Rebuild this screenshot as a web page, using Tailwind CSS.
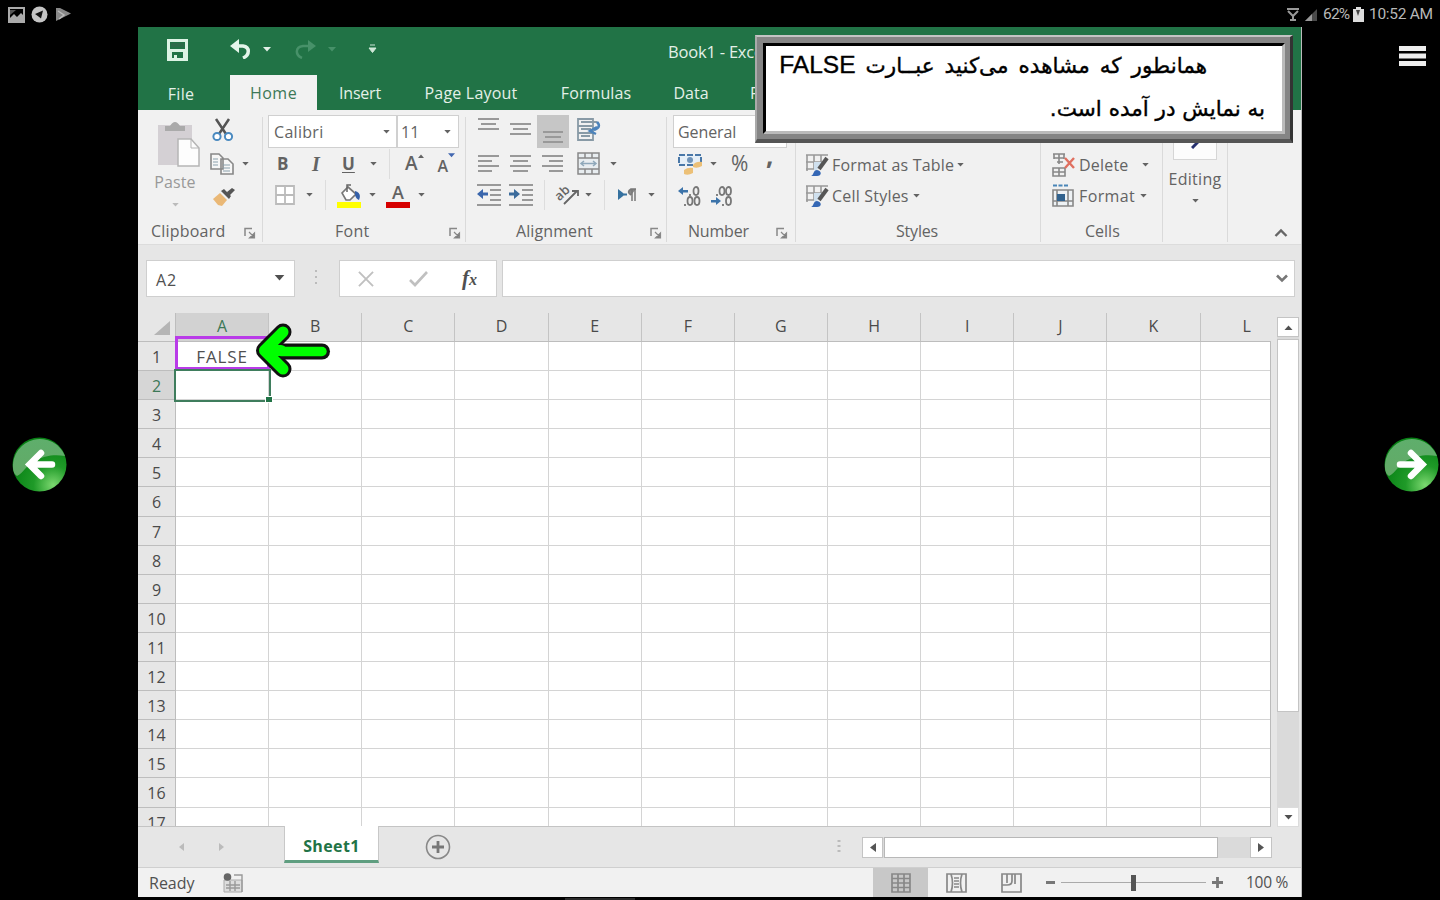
<!DOCTYPE html>
<html lang="en">
<head>
    <meta charset="UTF-8">
    <meta name="viewport" content="width=device-width, initial-scale=1.0">
    <title>Book1 - Excel</title>
    <script src="https://cdn.jsdelivr.net/npm/@tailwindcss/browser@4"></script>
</head>
<body class="relative bg-black w-[1440px] h-[900px] overflow-hidden flex flex-col font-['Open_Sans','Noto_Sans',sans-serif] text-[16px] text-[#505050]">

    <!-- Shared symbols -->
    <svg class="absolute w-0 h-0">
        <symbol id="caret" viewBox="0 0 8 5"><path d="M0 0h8L4 4.5z" fill="currentColor"/></symbol>
        <symbol id="launcher" viewBox="0 0 12 12"><path d="M1 9V1.500h7" fill="none" stroke="#888" stroke-width="1.500"/><path d="M5 5l5 5M10.500 6v5h-5z" fill="#777" stroke="#888" stroke-width="1.200"/></symbol>
        <symbol id="styleIcon" viewBox="0 0 24 24">
            <path d="M1 2h22M1 9h16M1 16h9M2 2v16M9 2v14M16 2v8" fill="none" stroke="#999" stroke-width="1.600"/>
            <path d="M9 9h8l-5 8H9z" fill="#cfe0ee"/>
            <path d="M22 5l-8 11" stroke="#555" stroke-width="4"/>
            <path d="M6 23c3-1 2-6 6-6 5 1 5 6 0 6z" fill="#3467b5"/>
        </symbol>
        <linearGradient id="glass" x1="0" y1="0" x2="0" y2="1"><stop offset="0" stop-color="#5fae6c"/><stop offset="1" stop-color="#62aa66"/></linearGradient>
        <radialGradient id="ball" cx=".75" cy=".88" r=".8"><stop offset="0" stop-color="#7cd870"/><stop offset=".45" stop-color="#1f9a28"/><stop offset="1" stop-color="#078014"/></radialGradient>
    </svg>

    <!-- Device status bar -->
    <header class="h-[27px] shrink-0 flex items-center justify-between pl-[8px] pr-[8px] pt-[2px] text-[#b8b8b8] font-[Roboto,sans-serif]">
        <div class="flex items-center gap-[6px]">
            <svg class="w-[17px] h-[16px]" viewBox="0 0 17 16"><path fill-rule="evenodd" d="M0 0h17v16H0zM2 2v9l4-4 3 3 4-4 2 2V2z" fill="#aaa"/><path d="M2 3h6l-6 5z" fill="#555"/></svg>
            <svg class="w-[17px] h-[17px]" viewBox="0 0 17 17"><circle cx="8.500" cy="8.500" r="8" fill="#c4c4c4"/><path d="M4 8l8-3.500-2 8-2.500-2z" fill="#111"/></svg>
            <svg class="ml-[2px] w-[15px] h-[13px]" viewBox="0 0 15 13"><path d="M0 0h4l11 5.500-6 3L0 13z" fill="#888"/><path d="M2 3l6 4-5 4" fill="none" stroke="#bbb" stroke-width="1.500"/></svg>
        </div>
        <div class="flex items-center text-[15.5px] leading-none">
            <svg class="w-[12px] h-[14px] mr-[6px]" viewBox="0 0 12 14"><path d="M0 1h12M1 3l5 5 5-5M3 12h6M6 7v6" fill="none" stroke="#999" stroke-width="2"/></svg>
            <svg class="w-[12px] h-[12px] mr-[6px]" viewBox="0 0 12 12"><path d="M12 0v12H0z" fill="#4a4a4a"/><path d="M7 5v7H0z" fill="#999"/></svg>
            <span class="tracking-[-0.8px] w-[28px]">62%</span>
            <svg class="w-[11px] h-[15px] ml-[2px] mr-[5px]" viewBox="0 0 11 15"><path d="M3 0h5v2h3v13H0V2h3z" fill="#ddd"/><path d="M3 3h4l-2 6z" fill="#444"/></svg>
            <span class="tracking-[-0.3px] w-[63px] whitespace-nowrap">10:52 AM</span>
        </div>
    </header>

    <div class="flex flex-1 min-h-0">
        <aside class="w-[138px] pl-[12px] pt-[410px]">
            <svg class="w-[55px] h-[55px]" viewBox="0 0 55 55">
                <circle cx="27.500" cy="27.500" r="27" fill="url(#ball)"/>
                <path d="M1 31A27 27 0 0 1 53 19c-14-2-20 1-27 3C16 25 12 36 5 39Q1 36 1 31z" fill="url(#glass)"/>
                <path d="M40 27.500H18M29 16L17.500 27.500 29 39" fill="none" stroke="#fff" stroke-width="6.500" stroke-linecap="round" stroke-linejoin="miter"/>
            </svg>
        </aside>

        <!-- Excel window -->
        <main class="relative w-[1164px] h-[870px] bg-[#e6e6e6] flex flex-col border-r border-[#bbb]">
            <!-- Title bar -->
            <div class="h-[48px] shrink-0 bg-[#217346] flex items-center text-[#e4f0e8]">
                <svg class="ml-[28px] mb-[2px] w-[23px] h-[22px]" viewBox="0 0 23 22"><path fill-rule="evenodd" d="M1 0h21v22H1zM4 3v7h15V3zM6 13v6h2v-3h3v3h6v-6z" fill="#dcf3e4"/><path d="M5 4h13v4H5z" fill="#2c6b49"/></svg>
                <svg class="ml-[41px] mb-[4px] w-[22px] h-[20px]" viewBox="0 0 22 20"><path d="M4 7h9c7 1 7 9 0 12" fill="none" stroke="#e4f5ea" stroke-width="3.500"/><path d="M0 7L9 0v14z" fill="#e4f5ea"/></svg>
                <svg class="ml-[11px] mb-[4px] w-[8px] h-[5px]"><use href="#caret"/></svg>
                <svg class="ml-[23px] mb-[4px] w-[22px] h-[20px]" viewBox="0 0 22 20"><path d="M18 7H9C1 8 1 16 8 19" fill="none" stroke="#479169" stroke-width="2.500"/><path d="M22 7l-8-6v12z" fill="#479169"/></svg>
                <svg class="ml-[12px] mb-[4px] w-[8px] h-[5px] text-[#479169]"><use href="#caret"/></svg>
                <svg class="ml-[32px] mb-[4px] w-[9px] h-[10px]" viewBox="0 0 9 10"><path d="M2 1h5M1 4h7L4.500 8.500z" fill="#cfe8d8" stroke="#cfe8d8"/></svg>
                <span class="ml-[291px] mt-[2px] text-[16.5px] tracking-[-0.2px]">Book1 - Excel</span>
            </div>
            <!-- Ribbon tabs -->
            <nav class="h-[35px] shrink-0 bg-[#217346] flex items-stretch text-[#e4f0e8] leading-[36px] text-center font-medium whitespace-nowrap">
                <span class="w-[86px] pt-[1px] tracking-[0.3px]">File</span>
                <span class="ml-[6px] w-[87px] bg-[#f2f2f2] text-[#3d7857] tracking-[0.5px]">Home</span>
                <span class="ml-[14px] w-[58px] tracking-[-0.2px]">Insert</span>
                <span class="ml-[20px] w-[124px] tracking-[0.2px]">Page Layout</span>
                <span class="ml-[20px] w-[86px] tracking-[0.1px]">Formulas</span>
                <span class="ml-[22px] w-[60px]">Data</span>
                <span class="ml-[29px]">Review</span>
            </nav>

            <!-- Ribbon -->
            <section class="h-[135px] shrink-0 bg-[#f1f1f1] border-b border-[#dcdcdc] flex pt-[6px] text-[#636363]">
                <div class="w-[125px] mt-px mb-[2px] border-r border-[#dadada] flex flex-col">
                    <div class="h-[99px] flex">
                        <div class="w-[74px] flex flex-col items-center text-[#999]">
                            <svg class="ml-[6px] mt-[4px] w-[43px] h-[47px]" viewBox="0 0 43 47"><path d="M1 4h34v40H1z" fill="#d4d0d4"/><path d="M8 8V5h5q5-8 10 0h5v5H8z" fill="#aaa"/><path d="M21 18h13l8 9v18H21z" fill="#fdfdfd" stroke="#b5b5b5" stroke-width="1.500"/><path d="M34 18v9h8" fill="none" stroke="#b5b5b5"/></svg>
                            <span class="leading-[22px] mt-[3px] tracking-[0.1px]">Paste</span>
                            <svg class="w-[7px] h-[4px] mt-[10px] text-[#bbb]"><use href="#caret"/></svg>
                        </div>
                        <div class="flex flex-col">
                            <svg class="mt-[1px] w-[22px] h-[24px]" viewBox="0 0 22 24"><path d="M4 1l10 15M17 1L7 16" stroke="#555" stroke-width="2.500"/><circle cx="5" cy="18.500" r="3.600" fill="#fff" stroke="#4a8ac0" stroke-width="2"/><circle cx="16.500" cy="18.500" r="3.600" fill="#fff" stroke="#4a8ac0" stroke-width="2"/></svg>
                            <div class="flex items-center mt-[11px] ml-[-2px]">
                                <svg class="w-[24px] h-[22px]" viewBox="0 0 24 22"><path d="M1 1h8l4 4v11H1zM11 6h7l5 5v10H11z" fill="#f6f6f6" stroke="#888" stroke-width="1.600"/><path d="M3 6h5M3 9h5M3 12h5M13 12h7M13 15h7M13 18h7" stroke="#8aa0ac" stroke-width="1.200"/></svg>
                                <svg class="ml-[8px] w-[7px] h-[4px]"><use href="#caret"/></svg>
                            </div>
                            <svg class="mt-[12px] w-[23px] h-[20px]" viewBox="0 0 23 20"><path d="M1 12l7-6 7 7-5 6-4-1z" fill="#eab876"/><path d="M9 4l8 8 2-3-7-7zM15 5l5-4 3 2-5 5z" fill="#555"/></svg>
                        </div>
                    </div>
                    <div class="flex items-center mt-[9px] leading-[22px]"><span class="pl-[13px] w-[106px] whitespace-nowrap tracking-[0.2px]">Clipboard</span><svg class="mt-[3px] w-[12px] h-[12px]"><use href="#launcher"/></svg></div>
                </div>

                <div class="w-[203px] mt-px mb-[2px] border-r border-[#dadada] flex flex-col">
                    <div class="h-[33px] flex pl-[5px]">
                        <div class="mt-[-2px] w-[129px] h-[33px] bg-white border border-[#d0d0d0] flex items-center justify-between pl-[5px] pr-[6px] tracking-[0.3px]">Calibri <svg class="w-[7px] h-[4px]"><use href="#caret"/></svg></div>
                        <div class="mt-[-2px] w-[62px] h-[33px] bg-white border border-[#d0d0d0] flex items-center justify-between pl-[3px] pr-[7px]">11 <svg class="w-[7px] h-[4px]"><use href="#caret"/></svg></div>
                    </div>
                    <div class="h-[32px] flex items-center text-[17px]">
                        <b class="ml-[14px] w-[14px]">B</b>
                        <b class="ml-[21px] w-[12px] font-['Liberation_Serif',serif] italic text-[20px]">I</b>
                        <b class="ml-[18px] w-[16px] underline underline-offset-2">U</b>
                        <svg class="ml-[12px] w-[7px] h-[4px]"><use href="#caret"/></svg>
                        <i class="ml-[12px] w-px h-[30px] bg-[#ddd]"></i>
                        <span class="ml-[15px] text-[19px] font-semibold">A</span>
                        <svg class="w-[6px] h-[4px] mb-[16px] rotate-180"><use href="#caret"/></svg>
                        <span class="ml-[14px] mt-[4px] text-[16px] font-semibold">A</span>
                        <svg class="w-[7px] h-[5px] mb-[16px] text-[#4267b0]"><use href="#caret"/></svg>
                    </div>
                    <div class="h-[34px] flex items-center">
                        <svg class="ml-[12px] w-[20px] h-[20px]" viewBox="0 0 20 20"><path d="M1 1h18v18H1zM10 1v18M1 10h18" fill="#fff" stroke="#bbb" stroke-width="1.800"/></svg>
                        <svg class="ml-[11px] w-[7px] h-[4px]"><use href="#caret"/></svg>
                        <i class="ml-[12px] w-px h-[30px] bg-[#ddd]"></i>
                        <svg class="ml-[11px] mt-[2px] w-[24px] h-[24px]" viewBox="0 0 24 24"><path d="M5 9l6-6 8 7-6 6H9z" fill="#fff" stroke="#777" stroke-width="1.700"/><path d="M10 8V1h4" fill="none" stroke="#666" stroke-width="1.500"/><path d="M18 7q7 2 4 9-3-1-4-5z" fill="#3560a8"/><path d="M0 18h24v6H0z" fill="#ff0"/></svg>
                        <svg class="ml-[8px] w-[7px] h-[4px]"><use href="#caret"/></svg>
                        <span class="ml-[10px] mt-[2px] w-[24px] h-[24px] border-b-[6px] border-[#d60000] text-center text-[18px] leading-[17px] font-semibold">A</span>
                        <svg class="ml-[8px] w-[7px] h-[4px]"><use href="#caret"/></svg>
                    </div>
                    <div class="flex items-center mt-[9px] leading-[22px]"><span class="pl-[72px] w-[186px] tracking-[0.3px]">Font</span><svg class="mt-[3px] w-[12px] h-[12px]"><use href="#launcher"/></svg></div>
                </div>

                <div class="w-[201px] mt-px mb-[2px] border-r border-[#dadada] flex flex-col">
                    <div class="h-[33px] flex pl-[12px]">
                        <svg class="mt-[-2px] w-[21px] h-[32px]" viewBox="0 0 21 32"><path d="M0 4h21M3 9h15M0 14h21" stroke="#999" stroke-width="2"/></svg>
                        <svg class="ml-[11px] mt-[-2px] w-[21px] h-[32px]" viewBox="0 0 21 32"><path d="M0 9h21M3 14h15M0 19h21" stroke="#999" stroke-width="2"/></svg>
                        <svg class="ml-[6px] mt-[-2px] w-[32px] h-[33px] bg-[#c6c6c6]" viewBox="0 0 32 33"><path d="M6 17h20M8 22h16M6 27h20" stroke="#999" stroke-width="2"/></svg>
                        <svg class="ml-[8px] mt-[1px] w-[25px] h-[24px]" viewBox="0 0 25 24"><path d="M1 1h15v21H1zM1 8h15M1 15h15M4 4h16M4 11h10M4 18h9" fill="none" stroke="#889aa6" stroke-width="1.800"/><path d="M20 4q5 5-3 8M20 9l-7 4 6 3" fill="none" stroke="#4c83bb" stroke-width="2.500"/></svg>
                    </div>
                    <div class="h-[32px] flex items-center pl-[12px]">
                        <svg class="w-[21px] h-[18px]" viewBox="0 0 21 18"><path d="M0 1h21M0 6h14M0 11h21M0 16h14" stroke="#999" stroke-width="1.800"/></svg>
                        <svg class="ml-[11px] w-[21px] h-[18px]" viewBox="0 0 21 18"><path d="M0 1h21M3 6h15M0 11h21M3 16h15" stroke="#999" stroke-width="1.800"/></svg>
                        <svg class="ml-[11px] w-[21px] h-[18px]" viewBox="0 0 21 18"><path d="M0 1h21M7 6h14M0 11h21M7 16h14" stroke="#999" stroke-width="1.800"/></svg>
                        <svg class="ml-[14px] w-[23px] h-[23px]" viewBox="0 0 23 23"><path d="M1 1h21v21H1zM1 6h21M1 17h21M8 1v5M15 1v5M8 17v5M15 17v5" fill="#e8edf0" stroke="#888" stroke-width="1.500"/><path d="M4 11.500h15M7 9l-3 2.500L7 14M16 9l3 2.500-3 2.500" fill="none" stroke="#8fa8ba" stroke-width="1.500"/></svg>
                        <svg class="ml-[10px] w-[7px] h-[4px]"><use href="#caret"/></svg>
                    </div>
                    <div class="h-[34px] flex items-center pl-[11px]">
                        <svg class="w-[24px] h-[22px]" viewBox="0 0 24 22"><path d="M0 1h24M13 6h11M13 11h11M13 16h11M0 21h24" stroke="#999" stroke-width="1.800"/><path d="M0 10l6-5v3.500h5v3H6V15z" fill="#3a66ac"/></svg>
                        <svg class="ml-[8px] w-[24px] h-[22px]" viewBox="0 0 24 22"><path d="M0 1h24M13 6h11M13 11h11M13 16h11M0 21h24" stroke="#999" stroke-width="1.800"/><path d="M11 10L5 5v3.500H0v3h5V15z" fill="#3c6c9c"/></svg>
                        <i class="ml-[11px] w-px h-[30px] bg-[#ddd]"></i>
                        <svg class="ml-[10px] w-[25px] h-[23px] overflow-visible" viewBox="0 0 25 23"><text x="-1" y="15" font-size="13" font-weight="600" fill="#666" transform="rotate(-42 6 10)">ab</text><path d="M9 21L22 8M17 8h6v5" fill="none" stroke="#666" stroke-width="1.800"/></svg>
                        <svg class="ml-[5px] w-[7px] h-[4px]"><use href="#caret"/></svg>
                        <i class="ml-[12px] w-px h-[30px] bg-[#ddd]"></i>
                        <svg class="ml-[13px] w-[19px] h-[13px]" viewBox="0 0 19 13"><path d="M0 1l7 5.500L0 12z" fill="#35719f"/><path d="M6 6.500h3" stroke="#35719f" stroke-width="2"/><path d="M18 1h-5q-5 3 0 6M14 1v12M17 1v12" fill="#888" stroke="#777" stroke-width="1.500"/></svg>
                        <svg class="ml-[11px] w-[7px] h-[4px]"><use href="#caret"/></svg>
                    </div>
                    <div class="flex items-center mt-[9px] leading-[22px]"><span class="pl-[50px] w-[184px] tracking-[0.1px]">Alignment</span><svg class="mt-[3px] w-[12px] h-[12px]"><use href="#launcher"/></svg></div>
                </div>

                <div class="w-[129px] mt-px mb-[2px] border-r border-[#dadada] flex flex-col">
                    <div class="h-[33px] flex pl-[6px]">
                        <div class="mt-[-2px] w-[114px] h-[33px] bg-white border border-[#d0d0d0] flex items-center pl-[4px] tracking-[-0.1px]">General</div>
                    </div>
                    <div class="h-[32px] flex items-center pl-[11px]">
                        <svg class="w-[24px] h-[23px]" viewBox="0 0 24 23"><path d="M1 2h22v10H1z" fill="#e6eff7" stroke="#4a78a8" stroke-width="2" stroke-dasharray="6 2"/><circle cx="12" cy="7" r="3" fill="#6f93b8"/><path d="M15 12q3-4 9-3v4q-5 3-9 1zM6 17q4-3 9-2v5q-5 3-9 1z" fill="#ecc077"/></svg>
                        <svg class="ml-[8px] w-[7px] h-[4px]"><use href="#caret"/></svg>
                        <span class="ml-[14px] text-[21px] w-[35px]">%</span>
                        <b class="text-[26px] mb-[18px] h-[24px] leading-[24px]">,</b>
                    </div>
                    <div class="h-[34px] flex items-center pl-[11px]">
                        <svg class="w-[23px] h-[20px]" viewBox="0 0 23 20"><path d="M0 5l5-4v3h5v2.500H5V9z" fill="#3d74aa"/><g fill="none" stroke="#777" stroke-width="1.800"><ellipse cx="18" cy="5" rx="2.500" ry="4"/><ellipse cx="12" cy="15" rx="2.500" ry="4"/><ellipse cx="19" cy="15" rx="2.500" ry="4"/><path d="M7 18v2M12 8v2"/></g></svg>
                        <svg class="ml-[9px] w-[23px] h-[20px]" viewBox="0 0 23 20"><path d="M11 15l-5-4v3H1v2.500h5V19z" fill="#3d74aa"/><g fill="none" stroke="#777" stroke-width="1.800"><ellipse cx="12" cy="5" rx="2.500" ry="4"/><ellipse cx="18.500" cy="5" rx="2.500" ry="4"/><ellipse cx="18.500" cy="15" rx="2.500" ry="4"/><path d="M7 8v2M13 18v2"/></g></svg>
                    </div>
                    <div class="flex items-center mt-[9px] leading-[22px]"><span class="pl-[21px] w-[109px] tracking-[-0.2px]">Number</span><svg class="mt-[3px] w-[12px] h-[12px]"><use href="#launcher"/></svg></div>
                </div>

                <div class="w-[245px] mt-px mb-[2px] border-r border-[#dadada] flex flex-col pt-[33px] pl-[9px]">
                    <div class="h-[32px] flex items-center"><svg class="w-[24px] h-[24px] mr-[3px]"><use href="#styleIcon"/></svg><span class="tracking-[0.2px]">Format as Table</span><svg class="ml-[3px] w-[7px] h-[4px]"><use href="#caret"/></svg></div>
                    <div class="h-[33px] flex items-center pt-[3px]"><svg class="w-[24px] h-[24px] mr-[3px]"><use href="#styleIcon"/></svg><span class="tracking-[0.2px]">Cell Styles</span><svg class="ml-[4px] w-[7px] h-[4px]"><use href="#caret"/></svg></div>
                    <span class="mt-[10px] leading-[22px] pl-[91px] tracking-[-0.2px]">Styles</span>
                </div>

                <div class="w-[122px] mt-px mb-[2px] border-r border-[#dadada] flex flex-col pt-[33px] pl-[11px]">
                    <div class="h-[32px] flex items-center">
                        <svg class="w-[23px] h-[24px] mr-[4px]" viewBox="0 0 23 24"><path d="M1 1h12M2 5h10M5 9h6M1 15h12v8H1zM7 15v8M1 19h12M2 1v5M7 1v10M12 1v5" fill="none" stroke="#888" stroke-width="1.600"/><path d="M13 5l9 10M22 5l-9 10" stroke="#e07060" stroke-width="2.400"/></svg>
                        <span class="w-[63px] tracking-[0.2px]">Delete</span><svg class="w-[7px] h-[4px]"><use href="#caret"/></svg>
                    </div>
                    <div class="h-[33px] flex items-center pt-[3px]">
                        <svg class="w-[23px] h-[24px] mr-[4px]" viewBox="0 0 23 24"><path d="M1 1.500h15" stroke="#4a86b8" stroke-width="2" stroke-dasharray="4 1.500"/><path d="M1 6h20v16H1zM5 6v16M1 17h20M16 6v16" fill="#eef2f5" stroke="#888" stroke-width="1.600"/><path d="M5 10h8v7H5z" fill="#31628e"/></svg>
                        <span class="w-[61px] tracking-[0.4px]">Format</span><svg class="w-[7px] h-[4px]"><use href="#caret"/></svg>
                    </div>
                    <span class="mt-[10px] leading-[22px] pl-[33px]">Cells</span>
                </div>

                <div class="w-[65px] mt-px mb-[2px] border-r border-[#dadada] flex flex-col items-center">
                    <div class="mt-[3px] w-[44px] h-[40px] bg-[#fcfcfc] border border-[#d6d6d6] flex items-end justify-center pb-[10px]"><svg class="w-[8px] h-[8px]" viewBox="0 0 8 8"><path d="M1 7l6-6" stroke="#26306e" stroke-width="3"/></svg></div>
                    <span class="mt-[8px] leading-[22px] tracking-[0.3px]">Editing</span>
                    <svg class="mt-[9px] w-[7px] h-[4px]"><use href="#caret"/></svg>
                </div>
                <svg class="ml-[46px] mt-[112px] w-[14px] h-[10px]" viewBox="0 0 14 10"><path d="M1.500 8L7 2.500 12.500 8" fill="none" stroke="#666" stroke-width="2.400"/></svg>
            </section>

            <!-- Formula bar -->
            <div class="h-[68px] shrink-0 flex items-start pt-[15px] pl-[8px]">
                <div class="w-[149px] h-[37px] bg-white border border-[#cfcfcf] flex items-center justify-between pl-[9px] pr-[9px]"><span class="tracking-[0.8px] pt-[2px]">A2</span> <svg class="w-[11px] h-[6px] mb-[1px]"><use href="#caret"/></svg></div>
                <svg class="ml-[19px] mt-[9px] w-[4px] h-[18px]" viewBox="0 0 4 18"><path d="M2 1v16" stroke="#bbb" stroke-width="2" stroke-dasharray="2 4"/></svg>
                <div class="ml-[21px] w-[158px] h-[37px] bg-white border border-[#cfcfcf] flex items-center pl-[18px]">
                    <svg class="w-[16px] h-[16px]" viewBox="0 0 17 17"><path d="M1 1l15 15M16 1L1 16" stroke="#c0c0c0" stroke-width="2"/></svg>
                    <svg class="ml-[35px] w-[19px] h-[16px]" viewBox="0 0 19 16"><path d="M1 9l5 5L18 1" fill="none" stroke="#c0c0c0" stroke-width="2.600"/></svg>
                    <span class="ml-[34px] font-['Liberation_Serif',serif] italic font-bold text-[21px] leading-none">f<span class="text-[16px]">x</span></span>
                </div>
                <div class="ml-[5px] w-[793px] h-[37px] bg-white border border-[#cfcfcf] flex items-center justify-end pr-[6px]"><svg class="w-[12px] h-[9px] mb-[1px]" viewBox="0 0 12 9"><path d="M1 1.500l5 5 5-5" fill="none" stroke="#777" stroke-width="2.600"/></svg></div>
            </div>

            <!-- Sheet -->
            <div class="h-[514px] shrink-0 flex">
                <div class="w-[1133px] flex flex-col overflow-hidden border-b border-[#c4c4c4]">
                    <div id="head" class="h-[29px] shrink-0 flex border-b border-[#bdbdbd]">
                        <div class="w-[38px] shrink-0 flex justify-end items-end pb-[6px] pr-[5px] border-r border-[#bdbdbd]"><svg class="w-[16px] h-[14px]" viewBox="0 0 16 14"><path d="M16 0v14H0z" fill="#b5b5b5"/></svg></div>
                    </div>
                    <div id="rows" class="relative flex-1 overflow-hidden bg-white border-r border-[#bbb]"></div>
                </div>
                <div class="ml-[6px] mt-[4px] w-[22px] flex flex-col bg-[#dadada]">
                    <div class="h-[20px] bg-white border border-[#c4c4c4] flex items-center justify-center"><svg class="w-[9px] h-[5px] rotate-180"><use href="#caret"/></svg></div>
                    <div class="mt-[2px] h-[373px] bg-white border border-[#c4c4c4]"></div>
                    <div class="mt-auto h-[20px] bg-white border border-[#dcdcdc] flex items-center justify-center"><svg class="w-[9px] h-[5px]"><use href="#caret"/></svg></div>
                </div>
            </div>

            <!-- Sheet tabs -->
            <div class="h-[41px] shrink-0 flex items-center border-b border-[#cfcfcf]">
                <svg class="ml-[41px] w-[5px] h-[8px]" viewBox="0 0 5 8"><path d="M5 0v8L0 4z" fill="#bbb"/></svg>
                <svg class="ml-[35px] w-[5px] h-[8px]" viewBox="0 0 5 8"><path d="M0 0v8l5-4z" fill="#bbb"/></svg>
                <span class="self-start mt-[-1px] ml-[60px] w-[95px] h-[37px] bg-white border-x border-[#c8c8c8] border-b-[3px] border-b-[#5f9e80] text-center font-bold text-[#217346] leading-[40px] tracking-[0.4px]">Sheet1</span>
                <svg class="ml-[46px] w-[26px] h-[26px]" viewBox="0 0 26 26"><circle cx="13" cy="13" r="11.500" fill="none" stroke="#888" stroke-width="1.600"/><path d="M13 7v12M7 13h12" stroke="#777" stroke-width="2.800"/></svg>
                <svg class="ml-[386px] w-[4px] h-[16px]" viewBox="0 0 4 16"><path d="M2 1v15" stroke="#bbb" stroke-width="3" stroke-dasharray="2 3"/></svg>
                <div class="ml-[21px] w-[410px] h-[21px] bg-[#dadada] flex">
                    <div class="w-[21px] bg-white border border-[#c4c4c4] flex items-center justify-center"><svg class="w-[6px] h-[9px]" viewBox="0 0 6 9"><path d="M6 0v9L0 4.500z" fill="#555"/></svg></div>
                    <div class="ml-[1px] w-[334px] bg-white border border-[#b8b8b8]"></div>
                    <div class="ml-auto w-[22px] bg-white border border-[#c4c4c4] flex items-center justify-center"><svg class="w-[6px] h-[9px]" viewBox="0 0 6 9"><path d="M0 0v9l6-4.500z" fill="#555"/></svg></div>
                </div>
            </div>

            <!-- Status bar -->
            <footer class="flex-1 bg-[#f1f1f1] flex items-center">
                <span class="ml-[11px] w-[74px]">Ready</span>
                <svg class="w-[20px] h-[20px]" viewBox="0 0 20 20"><path d="M1 7h18v12H1z" fill="#ddd" stroke="#aaa"/><circle cx="4.500" cy="4" r="3.800" fill="#666"/><path d="M11 2h8v17M3 12h14M3 15h14M7 8v10M12 8v10" fill="none" stroke="#999" stroke-width="1.400"/></svg>
                <div class="ml-[630px] w-[55px] self-stretch bg-[#c8c8c8] flex items-center justify-center"><svg class="w-[20px] h-[20px]" viewBox="0 0 20 20"><path d="M1 1h18v18H1zM1 5.500h18M1 10h18M1 14.500h18M7 1v18M13 1v18" fill="none" stroke="#888" stroke-width="1.700"/></svg></div>
                <svg class="ml-[18px] w-[21px] h-[20px]" viewBox="0 0 21 20"><path d="M1 1h19v18H1zM5 1q3 9 0 18M16 1q-3 9 0 18M8 5h5M8 8h5M8 11h5M8 14h5" fill="none" stroke="#888" stroke-width="1.700"/></svg>
                <svg class="ml-[34px] w-[21px] h-[20px]" viewBox="0 0 21 20"><path d="M1 1h19v18H1zM6 1v9M1 12h5q5 0 5-4V1M14 1v10" fill="none" stroke="#888" stroke-width="1.700"/></svg>
                <i class="ml-[24px] w-[9px] h-[3px] bg-[#777]"></i>
                <div class="ml-[6px] w-[145px] flex items-center"><i class="w-[70px] h-px bg-[#aaa]"></i><i class="w-[5px] h-[16px] bg-[#555]"></i><i class="w-[70px] h-px bg-[#aaa]"></i></div>
                <svg class="ml-[6px] w-[11px] h-[11px]" viewBox="0 0 11 11"><path d="M5.500 0v11M0 5.500h11" stroke="#777" stroke-width="2.800"/></svg>
                <span class="ml-[23px] text-[15.5px] tracking-[-0.3px] whitespace-nowrap">100 %</span>
            </footer>

            <!-- Highlight and pointer over A1 -->
            <div class="absolute left-[37px] top-[309px] w-[95px] h-[34px] border-[3px] border-[#b93be8]"></div>
            <svg class="absolute left-[117px] top-[295px] w-[76px] h-[58px]" viewBox="0 0 76 58">
                <path d="M26.500 29.500H67" fill="none" stroke="#111" stroke-width="16" stroke-linecap="round"/>
                <path d="M28 10L9.500 28.500 28 47" fill="none" stroke="#111" stroke-width="17" stroke-linecap="round" stroke-linejoin="round"/>
                <path d="M26 29.500H67" fill="none" stroke="#0f0" stroke-width="9.500" stroke-linecap="round"/>
                <path d="M28 10L9.500 28.500 28 47M13 28.500h13" fill="none" stroke="#0f0" stroke-width="11" stroke-linecap="round" stroke-linejoin="round"/>
            </svg>

            <!-- Lesson callout -->
            <div class="absolute left-[617px] top-[8px] w-[538px] h-[108px] bg-[#858585] border-t-2 border-l-2 border-r-[3px] border-b-[4px] border-t-[#c4c4c4] border-l-[#aaa] border-r-[#333] border-b-[#555] pt-[6px] pl-[6px] pr-[5px] pb-[5px]">
                <div dir="rtl" lang="fa" class="h-full bg-white border-t-[3px] border-l-[3px] border-r-[3px] border-b-[3px] border-t-black border-l-black border-r-[#bbb] border-b-[#bbb] text-black font-['DejaVu_Sans',sans-serif] text-[21.5px] whitespace-nowrap [-webkit-text-stroke:0.4px_black]">
                    <p class="pr-[75px] h-[40px] leading-[38px] [word-spacing:3.2px]">همانطور که مشاهده می‌کنید عبــارت <span class="font-['Liberation_Sans',sans-serif] text-[24.5px]">FALSE</span></p>
                    <p class="pr-[17px] h-[40px] leading-[46px]">به نمایش در آمده است.</p>
                </div>
            </div>
        </main>

        <aside class="flex-1 pt-[19px]">
            <svg class="ml-[97px] w-[27px] h-[20px]" viewBox="0 0 27 20"><path d="M0 0h27v5H0zM0 7.500h27v5H0zM0 15h27v5H0z" fill="#eee"/></svg>
            <svg class="ml-[82px] mt-[371px] w-[55px] h-[55px]" viewBox="0 0 55 55">
                <circle cx="27.500" cy="27.500" r="27" fill="url(#ball)"/>
                <path d="M1 31A27 27 0 0 1 53 19c-14-2-20 1-27 3C16 25 12 36 5 39Q1 36 1 31z" fill="url(#glass)"/>
                <path d="M16 27.500h22M27 16l11.500 11.500L27 39" fill="none" stroke="#fff" stroke-width="6.500" stroke-linecap="round"/>
            </svg>
        </aside>
    </div>
    <i class="absolute left-[565px] bottom-0 w-[70px] h-[2px] bg-[#2a2a2a]"></i>

    <script>
        const cols = "ABCDEFGHIJKL".split("");
        const head = document.getElementById("head");
        const rows = document.getElementById("rows");

        cols.forEach((c, i) => {
            const active = i === 0 ? "bg-[#d2d2d2] text-[#3d7857]" : "text-[#4a4a4a]";
            head.insertAdjacentHTML("beforeend",
                `<div class="w-[93.15px] shrink-0 border-r border-[#c4c4c4] text-center font-medium leading-[27px] ${active}">${c}</div>`);
        });

        for (let r = 1; r <= 17; r++) {
            const active = r === 2 ? "bg-[#d6d6d6] text-[#3d7857]" : "bg-[#e6e6e6] text-[#4a4a4a]";
            let cells = "";
            cols.forEach((c, i) => {
                const ring = r === 2 && i === 0 ? "outline-2 outline-[#3f7d5d] relative z-10" : "";
                const handle = ring ? `<i class="absolute -right-[5px] -bottom-[4px] w-[8px] h-[7px] bg-[#217346] border border-white"></i>` : "";
                cells += `<div class="w-[93.15px] shrink-0 border-r border-b border-[#d4d4d4] text-center text-[17px] tracking-[0.9px] font-medium leading-[30px] ${ring}">${r === 1 && i === 0 ? "FALSE" : ""}${handle}</div>`;
            });
            rows.insertAdjacentHTML("beforeend",
                `<div class="flex h-[29.1px]"><div class="w-[38px] shrink-0 border-r border-b border-[#bdbdbd] text-center font-medium leading-[30px] ${active}">${r}</div>${cells}</div>`);
        }
    </script>

</body>
</html>
